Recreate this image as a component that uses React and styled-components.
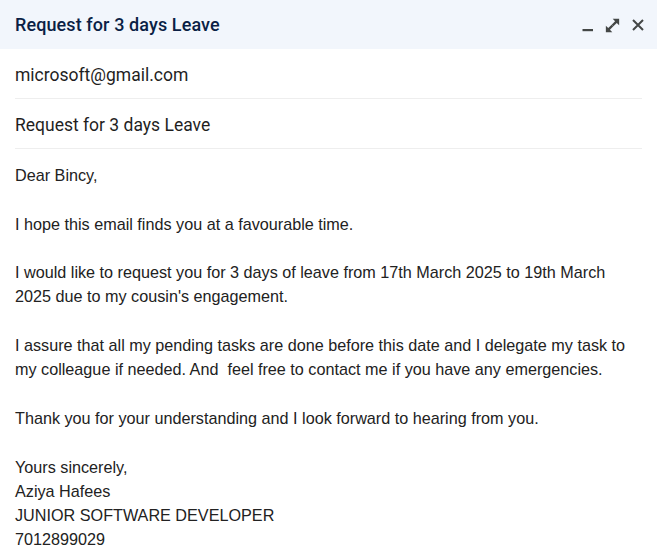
import styled, { createGlobalStyle } from 'styled-components';

const GlobalStyle = createGlobalStyle`
  html, body {
    margin: 0;
    padding: 0;
    background: #ffffff;
  }
`;

function App() {
  return (
    <>
      <GlobalStyle />
      <Window>
        <Header>
          <Title>Request for 3 days Leave</Title>
          <Controls>
            <IconButton aria-label="Minimize">
              <svg width="14" height="14" viewBox="0 0 14 14">
                <rect x="1.5" y="11" width="10.5" height="2.2" fill="#444746" />
              </svg>
            </IconButton>
            <IconButton aria-label="Pop out">
              <svg width="15" height="15" viewBox="0 0 14 14" fill="#444746">
                <path d="M7.2 0.8h6v6l-2.2-2.2-3.2 3.2-1.6-1.6 3.2-3.2z" />
                <path d="M6.8 13.2h-6v-6l2.2 2.2 3.2-3.2 1.6 1.6-3.2 3.2z" />
              </svg>
            </IconButton>
            <IconButton aria-label="Close">
              <svg width="14" height="14" viewBox="0 0 14 14">
                <path
                  d="M2 2L12 12M12 2L2 12"
                  stroke="#444746"
                  strokeWidth="2"
                  fill="none"
                />
              </svg>
            </IconButton>
          </Controls>
        </Header>
        <Field>microsoft@gmail.com</Field>
        <Field>Request for 3 days Leave</Field>
        <Body>
          <p>Dear Bincy,</p>
          <p>I hope this email finds you at a favourable time.</p>
          <p>
            I would like to request you for 3 days of leave from 17th March 2025
            to 19th March 2025 due to my cousin's engagement.
          </p>
          <p>
            I assure that all my pending tasks are done before this date and I
            delegate my task to my colleague if needed. And&nbsp; feel free to
            contact me if you have any emergencies.
          </p>
          <p>
            Thank you for your understanding and I look forward to hearing from
            you.
          </p>
          <p>
            Yours sincerely,
            <br />
            Aziya Hafees
            <br />
            JUNIOR SOFTWARE DEVELOPER
            <br />
            7012899029
          </p>
        </Body>
      </Window>
    </>
  );
}

export default App;

const Window = styled.div`
  width: 657px;
  min-height: 554px;
  background: #ffffff;
  display: flex;
  flex-direction: column;
`;

const Header = styled.div`
  height: 49px;
  background: #f2f6fc;
  display: flex;
  align-items: center;
  justify-content: space-between;
  padding: 0 12px 0 15px;
  box-sizing: border-box;
`;

const Title = styled.div`
  font-family: 'Roboto', 'Noto Sans', sans-serif;
  font-size: 18px;
  font-weight: 500;
  color: #0b1f45;
  letter-spacing: 0.1px;
`;

const Controls = styled.div`
  display: flex;
  align-items: center;
  gap: 10px;
  margin-top: 1px;
`;

const IconButton = styled.button`
  border: none;
  background: transparent;
  padding: 0;
  width: 15px;
  height: 15px;
  display: flex;
  align-items: center;
  justify-content: center;
  cursor: pointer;
`;

const Field = styled.div`
  margin: 0 15px;
  height: 50px;
  display: flex;
  align-items: center;
  border-bottom: 1px solid #eeeeee;
  box-sizing: border-box;
  font-family: 'Roboto', 'Noto Sans', sans-serif;
  font-size: 17.5px;
  color: #1f1f1f;
  padding-top: 2px;
`;

const Body = styled.div`
  padding: 14px 15px 0;
  font-family: 'Liberation Sans', Arial, sans-serif;
  font-size: 16.2px;
  line-height: 24.3px;
  color: #222222;
  p {
    margin: 0 0 24.3px;
  }
`;
